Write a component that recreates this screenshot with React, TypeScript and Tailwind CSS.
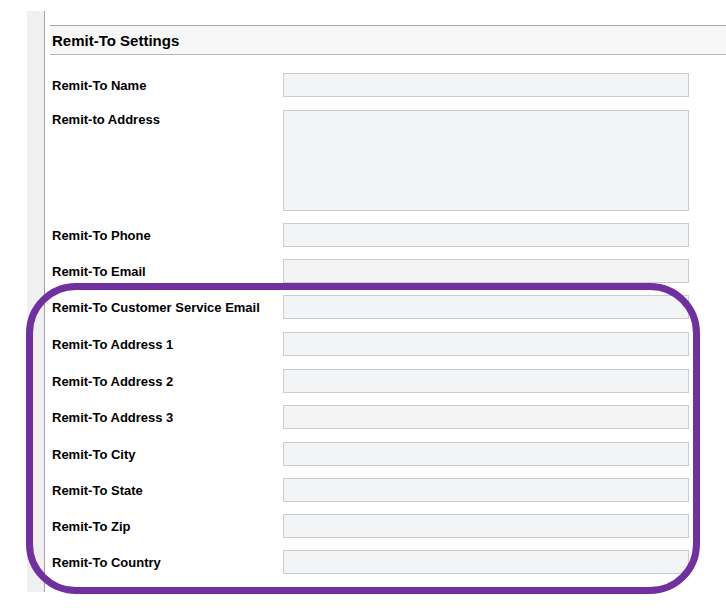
import React from "react";

type Field = { id: string; label: string; mt: string; tall?: boolean };

const fields: Field[] = [
  { id: "name", label: "Remit-To Name", mt: "mt-[18px]" },
  { id: "address", label: "Remit-to Address", mt: "mt-[13px]", tall: true },
  { id: "phone", label: "Remit-To Phone", mt: "mt-[12px]" },
  { id: "email", label: "Remit-To Email", mt: "mt-[12px]" },
  { id: "cs-email", label: "Remit-To Customer Service Email", mt: "mt-[12px]" },
  { id: "address1", label: "Remit-To Address 1", mt: "mt-[13px]" },
  { id: "address2", label: "Remit-To Address 2", mt: "mt-[13px]" },
  { id: "address3", label: "Remit-To Address 3", mt: "mt-[12px]" },
  { id: "city", label: "Remit-To City", mt: "mt-[13px]" },
  { id: "state", label: "Remit-To State", mt: "mt-[12px]" },
  { id: "zip", label: "Remit-To Zip", mt: "mt-[12px]" },
  { id: "country", label: "Remit-To Country", mt: "mt-[12px]" },
];

function FieldRow({ label, mt, tall }: Field) {
  return (
    <div className={`flex ${mt} ${tall ? "items-start" : "items-center"}`}>
      <label
        className={`w-[233px] pl-[2px] text-[13px] leading-4 font-bold text-black ${
          tall ? "pt-[2px]" : "pt-[2px]"
        }`}
      >
        {label}
      </label>
      {tall ? (
        <textarea className="w-[406px] h-[101px] resize-none bg-[#f3f4f6] border border-[#cccccc] outline-none" />
      ) : (
        <input
          type="text"
          className="w-[406px] h-6 bg-[#f3f4f6] border border-[#cccccc] outline-none"
        />
      )}
    </div>
  );
}

export default function App() {
  return (
    <div className="relative w-[726px] h-[608px] bg-white pt-[11px] font-['Liberation_Sans',Arial,sans-serif] overflow-hidden">
      <div className="flex">
        <div className="ml-[27px] w-[18px] bg-[#f0f0f0] border-r border-[#a3a3a3]" />
        <div className="flex-1 ml-[5px] pt-[14px] pb-[18px]">
          <div className="h-[30px] flex items-center pl-[2px] pt-[2px] bg-[#f7f7f7] border-y border-t-[#a8a8a8] border-b-[#b8b8b8]">
            <h2 className="text-[15px] font-bold text-black">Remit-To Settings</h2>
          </div>
          {fields.map((f) => (
            <FieldRow key={f.id} {...f} />
          ))}
        </div>
      </div>

      {/* highlight annotation */}
      <div className="absolute left-[26px] top-[283px] w-[674px] h-[311px] border-[7px] border-[#7030a0] rounded-[50px] pointer-events-none" />
    </div>
  );
}
